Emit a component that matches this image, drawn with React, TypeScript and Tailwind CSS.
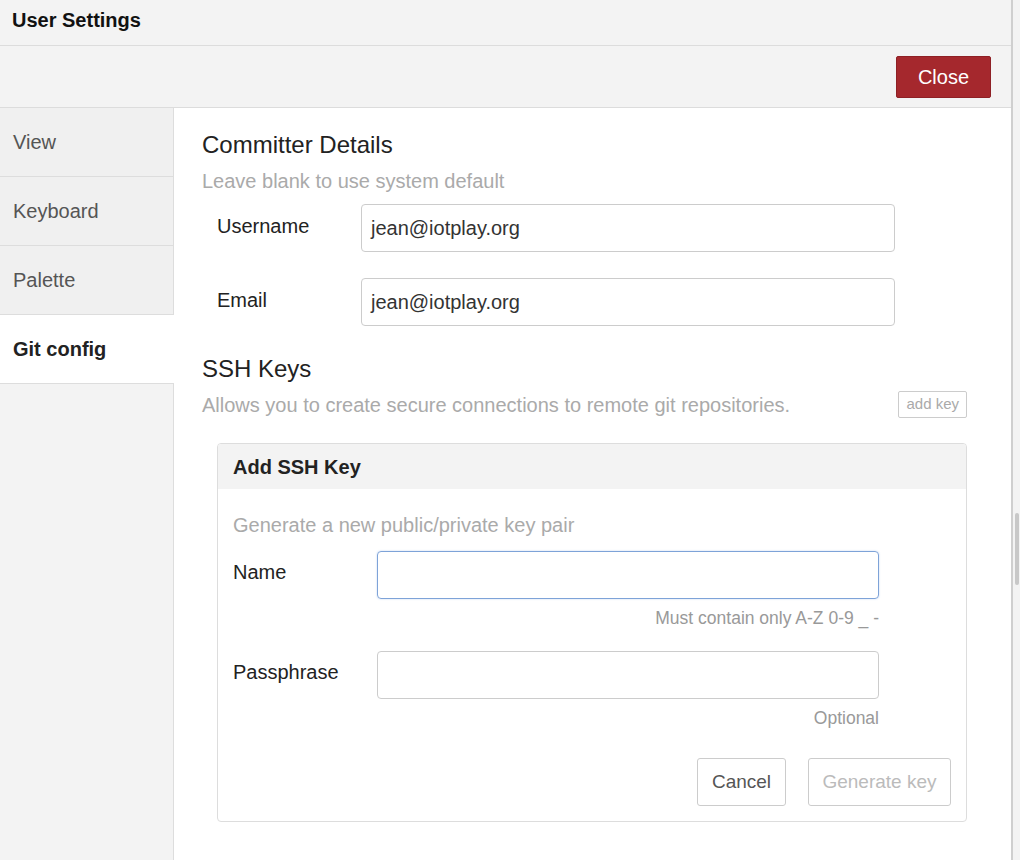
import React from "react";

function Tab({ label, active }: { label: string; active?: boolean }) {
  return (
    <div
      className={
        active
          ? "h-[69px] flex items-center pl-[13px] bg-white border-b border-[#ddd] text-[20px] font-bold text-[#222]"
          : "h-[69px] flex items-center pl-[13px] bg-[#f0f0f0] border-b border-r border-[#ddd] text-[20px] text-[#555]"
      }
    >
      {label}
    </div>
  );
}

export default function App() {
  return (
    <div className="w-[1020px] h-[860px] flex overflow-hidden bg-white font-['Liberation_Sans',Arial,sans-serif]">
      <div className="w-[1013px] flex flex-col border-r-2 border-[#cfcfcf]">
        <div className="h-[46px] shrink-0 bg-[#f3f3f3] border-b border-[#dcdcdc] flex items-center pl-[12px] pb-[6px]">
          <span className="text-[20px] font-bold text-[#111]">User Settings</span>
        </div>
        <div className="h-[62px] shrink-0 bg-[#f3f3f3] border-b border-[#dcdcdc] flex items-center justify-end pr-[20px]">
          <button className="w-[95px] h-[42px] bg-[#a5282d] border border-[#8e2025] rounded-[2px] text-white text-[20px]">
            Close
          </button>
        </div>
        <div className="flex flex-1 min-h-0">
          <div className="w-[174px] shrink-0 flex flex-col">
            <Tab label="View" />
            <Tab label="Keyboard" />
            <Tab label="Palette" />
            <Tab label="Git config" active />
            <div className="flex-1 bg-[#f3f3f3] border-r border-[#ddd]" />
          </div>
          <div className="flex-1 pl-[28px] pr-[44px] pt-[23px]">
            <div className="text-[24px] leading-[28px] text-[#222]">Committer Details</div>
            <div className="mt-[10px] text-[20px] leading-[24px] text-[#aaa]">Leave blank to use system default</div>
            <div className="mt-[11px] pl-[15px] pr-[72px] flex flex-col gap-[26px]">
              <div className="flex items-start">
                <div className="w-[144px] pt-[10px] text-[20px] leading-[24px] text-[#222]">Username</div>
                <div className="flex-1 h-[48px] border border-[#ccc] rounded-[4px] flex items-center pl-[9px] text-[20px] text-[#333]">
                  jean@iotplay.org
                </div>
              </div>
              <div className="flex items-start">
                <div className="w-[144px] pt-[10px] text-[20px] leading-[24px] text-[#222]">Email</div>
                <div className="flex-1 h-[48px] border border-[#ccc] rounded-[4px] flex items-center pl-[9px] text-[20px] text-[#333]">
                  jean@iotplay.org
                </div>
              </div>
            </div>
            <div className="mt-[29px] text-[24px] leading-[28px] text-[#222]">SSH Keys</div>
            <div className="mt-[8px] h-[27px] flex items-center justify-between">
              <span className="text-[20px] leading-[24px] text-[#aaa]">
                Allows you to create secure connections to remote git repositories.
              </span>
              <span className="h-[27px] px-[7px] flex items-center border border-[#ccc] rounded-[2px] text-[15px] text-[#aaa]">
                add key
              </span>
            </div>
            <div className="mt-[25px] ml-[15px] border border-[#ddd] rounded-[4px] overflow-hidden">
              <div className="h-[45px] bg-[#f3f3f3] flex items-center pl-[15px] text-[20px] font-bold text-[#222]">
                Add SSH Key
              </div>
              <div className="px-[15px] pt-[24px] pb-[15px]">
                <div className="text-[20px] leading-[24px] text-[#aaa]">Generate a new public/private key pair</div>
                <div className="mt-[14px] pr-[72px]">
                  <div className="flex items-start">
                    <div className="w-[144px] pt-[9px] text-[20px] leading-[24px] text-[#222]">Name</div>
                    <div className="flex-1 h-[48px] border border-[#7ea3d8] rounded-[4px] shadow-[0_0_2px_rgba(102,150,220,0.4)]" />
                  </div>
                  <div className="mt-[8px] text-right text-[17.5px] leading-[22px] text-[#999]">Must contain only A-Z 0-9 _ -</div>
                  <div className="mt-[22px] flex items-start">
                    <div className="w-[144px] pt-[9px] text-[20px] leading-[24px] text-[#222]">Passphrase</div>
                    <div className="flex-1 h-[48px] border border-[#ccc] rounded-[4px]" />
                  </div>
                  <div className="mt-[8px] text-right text-[17.5px] leading-[22px] text-[#999]">Optional</div>
                </div>
                <div className="mt-[29px] flex justify-end gap-[22px]">
                  <button className="w-[89px] h-[48px] border border-[#ccc] rounded-[3px] text-[19px] text-[#555]">
                    Cancel
                  </button>
                  <button className="w-[143px] h-[48px] border border-[#ccc] rounded-[3px] text-[19px] text-[#bbb]">
                    Generate key
                  </button>
                </div>
              </div>
            </div>
          </div>
        </div>
      </div>
      <div className="flex-1 bg-[#f3f3f3] relative">
        <div className="absolute left-[2px] top-[513px] w-[4px] h-[72px] bg-[#c8c8c8] rounded-[2px]" />
      </div>
    </div>
  );
}
